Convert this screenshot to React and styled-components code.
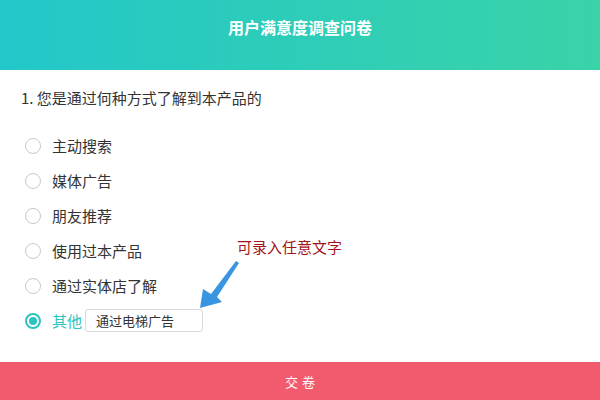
import React, { useState } from 'react';
import styled, { createGlobalStyle } from 'styled-components';

const GlobalStyle = createGlobalStyle`
	html, body {
		margin: 0;
		padding: 0;
		background: #fff;
		font-family: "Noto Sans CJK SC", "Noto Sans", "Liberation Sans", sans-serif;
	}
`;

const OPTIONS = ['主动搜索', '媒体广告', '朋友推荐', '使用过本产品', '通过实体店了解', '其他'];

const Page = styled.div`
	display: flex;
	flex-direction: column;
	width: 600px;
	height: 400px;
	overflow: hidden;
`;

const Header = styled.header`
	height: 70px;
	box-sizing: border-box;
	padding-top: 16px;
	background: linear-gradient(90deg, #22c7c9 0%, #3ad3a8 100%);
	color: #fff;
	text-align: center;
	font-size: 16px;
	font-weight: bold;
	line-height: 22px;
`;

const Main = styled.main`
	padding: 0 20px;
`;

const Question = styled.p`
	margin: 18px 0 0 1px;
	font-size: 15px;
	line-height: 20px;
	color: #333;
`;

const OptionList = styled.ul`
	position: relative;
	list-style: none;
	margin: 20px 0 0;
	padding: 0;
`;

const Option = styled.li`
	display: flex;
	align-items: center;
	height: 35px;
	padding-left: 5px;
	font-size: 15px;
	color: ${({ $active }) => ($active ? '#2bc4c0' : '#333')};
	cursor: pointer;
`;

const Radio = styled.span`
	display: flex;
	align-items: center;
	justify-content: center;
	box-sizing: border-box;
	width: 16px;
	height: 16px;
	margin-right: 11px;
	border-radius: 50%;
	border: ${({ $checked }) => ($checked ? '2px solid #2bc4c0' : '1px solid #c8c8c8')};

	&::after {
		content: '';
		display: ${({ $checked }) => ($checked ? 'block' : 'none')};
		width: 8px;
		height: 8px;
		border-radius: 50%;
		background: #2bc4c0;
	}
`;

const OtherInput = styled.input`
	box-sizing: border-box;
	width: 118px;
	height: 23px;
	margin-left: 3px;
	padding: 0 10px;
	border: 1px solid #d9d9d9;
	border-radius: 3px;
	font-family: inherit;
	font-size: 13px;
	color: #333;
	outline: none;
`;

const Note = styled.div`
	position: absolute;
	left: 217px;
	top: 109px;
	font-size: 15px;
	line-height: 20px;
	color: #a3141c;
`;

const Arrow = styled.svg`
	position: absolute;
	left: 178px;
	top: 133px;
`;

const Footer = styled.button`
	margin-top: auto;
	height: 38px;
	border: none;
	background: #f25b6e;
	color: #fff;
	font-family: inherit;
	font-size: 13px;
	letter-spacing: 4px;
	text-indent: 4px;
`;

export default function App() {
	const [choice, setChoice] = useState(5);
	const [other, setOther] = useState('通过电梯广告');

	return (
		<Page>
			<GlobalStyle />
			<Header>用户满意度调查问卷</Header>
			<Main>
				<Question>1. 您是通过何种方式了解到本产品的</Question>
				<OptionList>
					{OPTIONS.map((label, i) => (
						<Option key={label} $active={choice === i} onClick={() => setChoice(i)}>
							<Radio $checked={choice === i} />
							{label}
							{i === OPTIONS.length - 1 && (
								<OtherInput value={other} onChange={(e) => setOther(e.target.value)} />
							)}
						</Option>
					))}
					<Note>可录入任意文字</Note>
					<Arrow width="46" height="50" viewBox="0 0 46 50">
						<path d="M38 0 L41 2 L19 36 L24 41 L2 47 L5 28 L13 33 Z" fill="#3a95e0" />
					</Arrow>
				</OptionList>
			</Main>
			<Footer>交卷</Footer>
		</Page>
	);
}
